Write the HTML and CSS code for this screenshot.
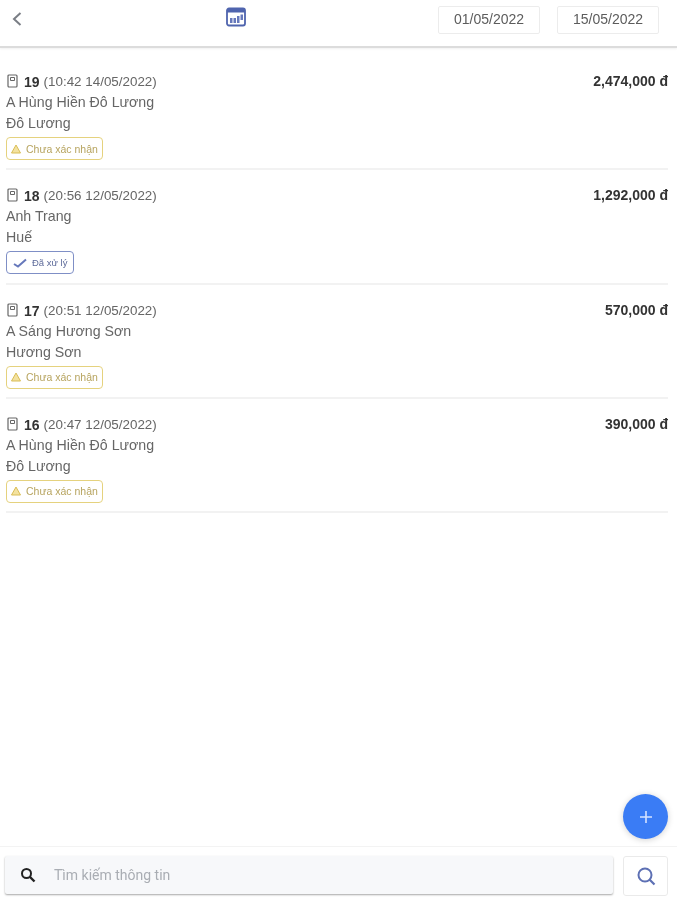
FILE: index.html
```html
<!DOCTYPE html>
<html lang="vi">
<head>
<meta charset="utf-8">
<title>Đơn hàng</title>
<link rel="stylesheet" href="styles.css">
</head>
<body>
<div class="app">
  <header class="topbar">
    <svg class="back" viewBox="0 0 12 16" width="12" height="16"><path d="M9.500 2 3 8l6.500 6" fill="none" stroke="#7a7e85" stroke-width="2"/></svg>
    <svg class="cal" viewBox="0 0 20 20" width="20" height="20"><rect x="1" y="1.500" width="18" height="17" rx="2" fill="#fff" stroke="#4f64ae" stroke-width="1.800"/><rect x="1" y="2" width="18" height="3.500" fill="#4f64ae"/><path d="M4 11h2.500v5H4zM7.500 11H10v5H7.500zM11 9h2.500v7H11zM14.500 7.500H17V13h-2.500z" fill="#6678bb"/></svg>
    <div class="dates">
      <div class="date">01/05/2022</div>
      <div class="date">15/05/2022</div>
    </div>
  </header>
  <main class="list">
    <article class="item">
      <div class="info">
        <div class="title"><svg class="doc" viewBox="0 0 11 14" width="11" height="14"><rect x="1" y="1" width="9" height="12" rx="1" fill="none" stroke="#666" stroke-width="1.200"/><path d="M3.500 3.500h4v3h-4z" fill="none" stroke="#666"/></svg><b>19</b><span>(10:42 14/05/2022)</span></div>
        <div class="line">A Hùng Hiền Đô Lương</div>
        <div class="line">Đô Lương</div>
        <div class="badge warn"><svg viewBox="0 0 10 10" width="10" height="10"><path d="M5 1 9.500 9H.5z" fill="#f3e2a0" stroke="#d9bd55"/></svg>Chưa xác nhận</div>
      </div>
      <div class="amount">2,474,000 đ</div>
    </article>
    <article class="item">
      <div class="info">
        <div class="title"><svg class="doc" viewBox="0 0 11 14" width="11" height="14"><rect x="1" y="1" width="9" height="12" rx="1" fill="none" stroke="#666" stroke-width="1.200"/><path d="M3.500 3.500h4v3h-4z" fill="none" stroke="#666"/></svg><b>18</b><span>(20:56 12/05/2022)</span></div>
        <div class="line">Anh Trang</div>
        <div class="line">Huế</div>
        <div class="badge done"><svg viewBox="0 0 14 10" width="14" height="10"><path d="M1 6l4 2.500L13 1.500" fill="none" stroke="#6678bb" stroke-width="2"/></svg>Đã xử lý</div>
      </div>
      <div class="amount">1,292,000 đ</div>
    </article>
    <article class="item">
      <div class="info">
        <div class="title"><svg class="doc" viewBox="0 0 11 14" width="11" height="14"><rect x="1" y="1" width="9" height="12" rx="1" fill="none" stroke="#666" stroke-width="1.200"/><path d="M3.500 3.500h4v3h-4z" fill="none" stroke="#666"/></svg><b>17</b><span>(20:51 12/05/2022)</span></div>
        <div class="line">A Sáng Hương Sơn</div>
        <div class="line">Hương Sơn</div>
        <div class="badge warn"><svg viewBox="0 0 10 10" width="10" height="10"><path d="M5 1 9.500 9H.5z" fill="#f3e2a0" stroke="#d9bd55"/></svg>Chưa xác nhận</div>
      </div>
      <div class="amount">570,000 đ</div>
    </article>
    <article class="item">
      <div class="info">
        <div class="title"><svg class="doc" viewBox="0 0 11 14" width="11" height="14"><rect x="1" y="1" width="9" height="12" rx="1" fill="none" stroke="#666" stroke-width="1.200"/><path d="M3.500 3.500h4v3h-4z" fill="none" stroke="#666"/></svg><b>16</b><span>(20:47 12/05/2022)</span></div>
        <div class="line">A Hùng Hiền Đô Lương</div>
        <div class="line">Đô Lương</div>
        <div class="badge warn"><svg viewBox="0 0 10 10" width="10" height="10"><path d="M5 1 9.500 9H.5z" fill="#f3e2a0" stroke="#d9bd55"/></svg>Chưa xác nhận</div>
      </div>
      <div class="amount">390,000 đ</div>
    </article>
  </main>
  <button class="fab" type="button"><svg viewBox="0 0 12 12" width="12" height="12"><path d="M6 0v12M0 6h12" stroke="#d5e2ff" stroke-width="1.600"/></svg></button>
  <footer class="bottombar">
    <div class="searchbox">
      <svg viewBox="0 0 16 16" width="16" height="16"><circle cx="6.500" cy="6.500" r="4.500" fill="none" stroke="#222" stroke-width="2"/><path d="M10 10l4.500 4.500" stroke="#222" stroke-width="2.400"/></svg>
      <span>Tìm kiếm thông tin</span>
    </div>
    <div class="searchbtn"><svg viewBox="0 0 20 20" width="20" height="20"><circle cx="9" cy="9" r="6.500" fill="none" stroke="#5d70b4" stroke-width="2"/><path d="M13.500 13.500l5 5" stroke="#5d70b4" stroke-width="2.200"/></svg></div>
  </footer>
</div>
</body>
</html>
```
FILE: styles.css
```css
* { box-sizing: border-box; }
html, body { margin: 0; padding: 0; background: #fff; }
body { font-family: "Liberation Sans", Arial, sans-serif; color: #555; }
.app { position: relative; width: 677px; height: 900px; display: flex; flex-direction: column; filter: blur(0.7px); }
.topbar { height: 48px; flex: none; display: flex; align-items: flex-start; padding: 6px 18px 0 11px; border-bottom: 2px solid #dcdcdc; box-shadow: 0 1px 2px rgba(0,0,0,.06); }
.back { margin-top: 5px; }
.cal { margin: 1px 0 0 203px; }
.dates { margin-left: auto; display: flex; gap: 17px; }
.date { width: 102px; height: 28px; border: 1px solid #ececec; border-radius: 2px; font-size: 14px; line-height: 25px; text-align: center; color: #5c5c5c; }
.list { flex: 1; padding: 8px 9px 0 6px; }
.item { height: 114.330px; padding-top: 19px; display: flex; justify-content: space-between; border-bottom: 2px solid #f2f2f2; }
.info { display: flex; flex-direction: column; align-items: flex-start; }
.title { height: 14px; font-size: 14px; line-height: 14px; display: flex; align-items: center; color: #666; }
.title b { color: #333; margin-right: 4px; }
.title span { font-size: 13.400px; }
.doc { margin: 0 6px 2px 1px; }
.line { font-size: 14.200px; line-height: 21px; color: #666; }
.title + .line { margin-top: 3px; }
.badge { height: 23px; margin-top: 3px; padding: 0 4px 0 4px; border-radius: 4px; display: flex; align-items: center; gap: 5px; font-size: 10.500px; }
.warn { border: 1px solid #e5d27e; color: #b7a45f; }
.done { border: 1px solid #7f8fc6; color: #5d6a9a; font-size: 9.500px; gap: 5px; padding: 0 6px; }
.amount { font-size: 14px; line-height: 14px; font-weight: 700; color: #333; margin-top: -1px; }
.fab { position: absolute; right: 9px; bottom: 61px; width: 45px; height: 45px; padding: 0; border: 0; border-radius: 50%; background: #3a7cf5; box-shadow: 0 1px 6px rgba(0,0,0,.18); display: flex; align-items: center; justify-content: center; }
.bottombar { height: 54px; flex: none; padding: 9px 9px 0 5px; border-top: 1px solid #f3f3f3; display: flex; justify-content: space-between; }
.searchbox { width: 608px; height: 38px; background: #f7f8fa; border-radius: 2px; box-shadow: 0 1px 2px rgba(0,0,0,.35); display: flex; align-items: center; gap: 18px; padding-left: 15px; font-family: Roboto, sans-serif; font-size: 14px; color: #a9adb3; }
.searchbtn { width: 45px; height: 40px; border: 1px solid #eaeaea; border-radius: 3px; display: flex; align-items: center; justify-content: center; }
```
